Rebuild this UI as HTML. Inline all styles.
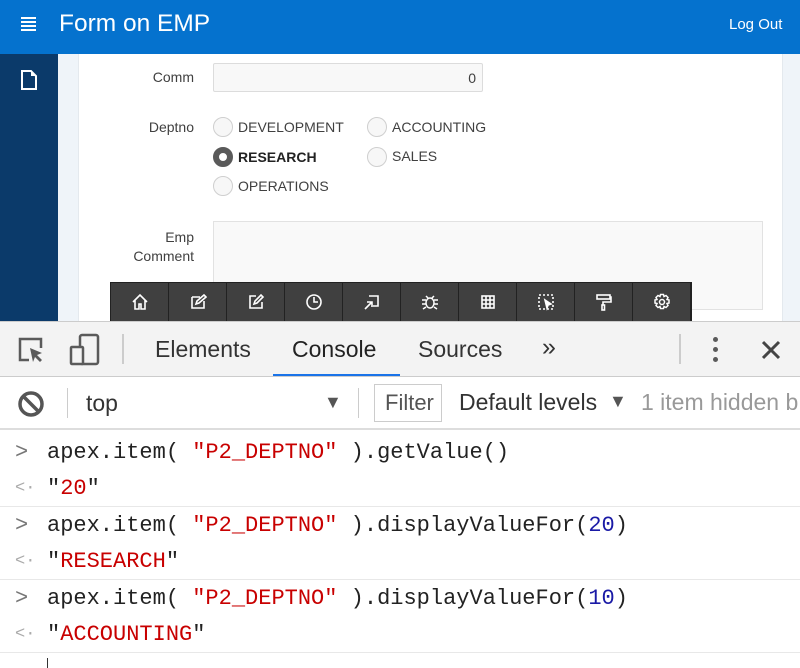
<!DOCTYPE html>
<html><head><style>
*{margin:0;padding:0;box-sizing:border-box}
body{width:800px;height:666px;overflow:hidden;font-family:"Liberation Sans",Arial,sans-serif;background:#fff;position:relative}
.abs{position:absolute}
.hdr{left:0;top:0;width:800px;height:54px;background:#0572ce;color:#fff}
.side{left:0;top:54px;width:58px;height:268px;background:#0b3a6a}
.strip{left:58px;top:54px;width:21px;height:268px;background:#eff4f9;border-right:1px solid #e4e9ee}
.rstrip{left:782px;top:54px;width:18px;height:268px;background:#eff4f9;border-left:1px solid #e4e9ee}
.lbl{font-size:14px;color:#404040;text-align:right}
.radio{width:20px;height:20px;border-radius:50%;border:1px solid #cfcfcf;background:#f7f7f7}
.rt{font-size:14px;color:#404040}
.tb{left:110px;top:282px;width:582px;height:40px;background:#404040;border:1px solid #222;display:flex}
.tb div{width:58.2px;height:38px;border-right:1px solid #222;display:flex;align-items:center;justify-content:center}
.mono{font-family:"Liberation Mono",monospace;font-size:22px;color:#222}
.red{color:#c80000}.blue{color:#1a1aa6}
.sep{left:0;width:800px;height:1px;background:#e8e8e8}
</style></head><body>
<div class="abs hdr">
 <div class="abs" style="left:21px;top:17px;width:15px">
  <div style="height:2px;background:#fff;margin-bottom:2px"></div><div style="height:2px;background:#fff;margin-bottom:2px"></div><div style="height:2px;background:#fff;margin-bottom:2px"></div><div style="height:2px;background:#fff"></div>
 </div>
 <div class="abs" style="left:59px;top:10px;font-size:24.5px">Form on EMP</div>
 <div class="abs" style="left:729px;top:16px;font-size:15px">Log Out</div>
</div>
<div class="abs side">
 <svg class="abs" style="left:20px;top:15px" width="18" height="22" viewBox="0 0 18 22"><path d="M2 2h9l5 5v13H2z" fill="none" stroke="#fff" stroke-width="2"/><path d="M11 2v5h5" fill="#fff"/></svg>
</div>
<div class="abs strip"></div>
<div class="abs rstrip"></div>
<div class="abs lbl" style="left:100px;top:69px;width:94px">Comm</div>
<div class="abs" style="left:213px;top:63px;width:270px;height:29px;background:#f8f8f8;border:1px solid #dcdcdc;border-radius:2px;font-size:14px;color:#404040;text-align:right;padding:6px 6px">0</div>
<div class="abs lbl" style="left:100px;top:119px;width:94px">Deptno</div>
<div class="abs radio" style="left:213px;top:117px"></div><div class="abs rt" style="left:238px;top:119px">DEVELOPMENT</div>
<div class="abs radio" style="left:367px;top:117px"></div><div class="abs rt" style="left:392px;top:119px">ACCOUNTING</div>
<div class="abs radio" style="left:213px;top:147px;background:#fff;border:6px solid #5a5a5a"></div><div class="abs rt" style="left:238px;top:149px;font-weight:bold;color:#222">RESEARCH</div>
<div class="abs radio" style="left:367px;top:147px"></div><div class="abs rt" style="left:392px;top:148px">SALES</div>
<div class="abs radio" style="left:213px;top:176px"></div><div class="abs rt" style="left:238px;top:178px">OPERATIONS</div>
<div class="abs lbl" style="left:100px;top:228px;width:94px;line-height:19px">Emp<br>Comment</div>
<div class="abs" style="left:213px;top:221px;width:550px;height:89px;background:#f9f9f9;border:1px solid #e2e2e2"></div>
<div class="abs tb">
 <div><svg width="18" height="18" viewBox="0 0 18 18" fill="none" stroke="#fff" stroke-width="1.6"><path d="M2 9L9 2l7 7M4 7v9h4v-5h2v5h4V7"/></svg></div>
 <div><svg width="18" height="18" viewBox="0 0 18 18" fill="none" stroke="#fff" stroke-width="1.6"><path d="M3 4h8M3 4v11h12V8M7 11l1-3 7-6 2 2-7 6z"/></svg></div>
 <div><svg width="18" height="18" viewBox="0 0 18 18" fill="none" stroke="#fff" stroke-width="1.6"><path d="M9 3H3v12h12V9M7 11l1-3 6-6 2 2-6 6z"/></svg></div>
 <div><svg width="18" height="18" viewBox="0 0 18 18" fill="none" stroke="#fff" stroke-width="1.6"><circle cx="9" cy="9" r="7"/><path d="M9 4v5h4"/></svg></div>
 <div><svg width="18" height="18" viewBox="0 0 18 18" fill="none" stroke="#fff" stroke-width="1.6"><path d="M6 3h9v10h-5M2 16l7-7M4 9h5v5"/></svg></div>
 <div><svg width="18" height="18" viewBox="0 0 18 18" fill="none" stroke="#fff" stroke-width="1.5"><ellipse cx="9" cy="10" rx="4" ry="5"/><path d="M1 7h4M13 7h4M1 11h4M13 11h4M2 16l3-2M16 16l-3-2M5 3l2 2M13 3l-2 2"/></svg></div>
 <div><svg width="18" height="18" viewBox="0 0 18 18" fill="none" stroke="#fff" stroke-width="1.6"><rect x="3" y="3" width="12" height="12"/><path d="M3 7h12M3 11h12M7 3v12M11 3v12"/></svg></div>
 <div><svg width="18" height="18" viewBox="0 0 18 18" fill="none" stroke="#fff" stroke-width="1.6" stroke-dasharray="2 2"><rect x="2" y="2" width="14" height="14"/><path d="M8 7l6 4-3 1-1 3z" fill="#fff" stroke-dasharray="0"/></svg></div>
 <div><svg width="18" height="18" viewBox="0 0 18 18" fill="none" stroke="#fff" stroke-width="1.6"><rect x="2" y="2" width="13" height="4"/><path d="M15 4h1v5H8v3"/><rect x="7" y="12" width="2.5" height="5"/></svg></div>
 <div><svg width="18" height="18" viewBox="0 0 18 18" fill="none" stroke="#fff" stroke-width="1.5"><circle cx="9" cy="9" r="2.5"/><path d="M7.5 1.5h3l.5 2 2-1 2 2-1 2 2 .5v3l-2 .5 1 2-2 2-2-1-.5 2h-3l-.5-2-2 1-2-2 1-2-2-.5v-3l2-.5-1-2 2-2 2 1z"/></svg></div>
</div>
<!-- devtools -->
<div class="abs" style="left:0;top:321px;width:800px;height:56px;background:#f3f3f3;border-top:1px solid #ccc;border-bottom:1px solid #ccc"></div>
<svg class="abs" style="left:17px;top:336px" width="30" height="30" viewBox="0 0 30 30" fill="none" stroke="#5a5a5a" stroke-width="2.5"><path d="M12 24H3V3h21v9"/><path d="M13 12l12 5-5 2 5 5-2 2-5-5-2 5z" fill="#5a5a5a" stroke="none"/></svg>
<svg class="abs" style="left:69px;top:333px" width="32" height="34" viewBox="0 0 32 34" fill="none" stroke="#5a5a5a" stroke-width="2.5"><rect x="11" y="2" width="18" height="29" rx="2"/><rect x="2" y="14" width="12" height="17" rx="1" fill="#f3f3f3"/></svg>
<div class="abs" style="left:122px;top:334px;width:2px;height:30px;background:#ccc"></div>
<div class="abs" style="left:155px;top:336px;font-size:23px;color:#333">Elements</div>
<div class="abs" style="left:292px;top:336px;font-size:23px;color:#222">Console</div>
<div class="abs" style="left:273px;top:374px;width:127px;height:2px;background:#1a73e8"></div>
<div class="abs" style="left:418px;top:336px;font-size:23px;color:#333">Sources</div>
<div class="abs" style="left:542px;top:333px;font-size:25px;color:#333">»</div>
<div class="abs" style="left:679px;top:334px;width:2px;height:30px;background:#ccc"></div>
<div class="abs" style="left:713px;top:337px"><div style="width:5px;height:5px;border-radius:50%;background:#5a5a5a;margin-bottom:5px"></div><div style="width:5px;height:5px;border-radius:50%;background:#5a5a5a;margin-bottom:5px"></div><div style="width:5px;height:5px;border-radius:50%;background:#5a5a5a"></div></div>
<svg class="abs" style="left:761px;top:340px" width="20" height="20" viewBox="0 0 20 20" stroke="#444" stroke-width="3"><path d="M2 2l16 16M18 2L2 18"/></svg>
<div class="abs" style="left:0;top:377px;width:800px;height:53px;background:#fff;border-bottom:2px solid #ddd"></div>
<svg class="abs" style="left:17px;top:390px" width="28" height="28" viewBox="0 0 28 28" fill="none" stroke="#555" stroke-width="3.5"><circle cx="14" cy="14" r="11"/><path d="M6 6l16 16"/></svg>
<div class="abs" style="left:67px;top:388px;width:1px;height:30px;background:#ccc"></div>
<div class="abs" style="left:86px;top:390px;font-size:23px;color:#333">top</div>
<div class="abs" style="left:324px;top:392px;font-size:18px;color:#555">▼</div>
<div class="abs" style="left:358px;top:388px;width:1px;height:30px;background:#ccc"></div>
<div class="abs" style="left:374px;top:384px;width:68px;height:38px;border:1px solid #ccc;font-size:22px;color:#555;padding:5px 0 0 10px;overflow:hidden;white-space:nowrap">Filter</div>
<div class="abs" style="left:459px;top:389px;font-size:23px;color:#333">Default levels</div>
<div class="abs" style="left:609px;top:391px;font-size:18px;color:#555">▼</div>
<div class="abs" style="left:641px;top:389px;font-size:23px;color:#999;white-space:nowrap">1 item hidden b</div>
<!-- console rows -->
<div class="abs mono" style="left:15px;top:440px;color:#777">&gt;</div>
<div class="abs mono" style="left:47px;top:440px;white-space:pre">apex.item( <span class="red">"P2_DEPTNO"</span> ).getValue()</div>
<div class="abs mono" style="left:15px;top:479px;color:#aaa;font-size:17px">&lt;·</div>
<div class="abs mono" style="left:47px;top:476px">"<span class="red">20</span>"</div>
<div class="abs sep" style="top:506px"></div>
<div class="abs mono" style="left:15px;top:513px;color:#777">&gt;</div>
<div class="abs mono" style="left:47px;top:513px;white-space:pre">apex.item( <span class="red">"P2_DEPTNO"</span> ).displayValueFor(<span class="blue">20</span>)</div>
<div class="abs mono" style="left:15px;top:552px;color:#aaa;font-size:17px">&lt;·</div>
<div class="abs mono" style="left:47px;top:549px">"<span class="red">RESEARCH</span>"</div>
<div class="abs sep" style="top:579px"></div>
<div class="abs mono" style="left:15px;top:586px;color:#777">&gt;</div>
<div class="abs mono" style="left:47px;top:586px;white-space:pre">apex.item( <span class="red">"P2_DEPTNO"</span> ).displayValueFor(<span class="blue">10</span>)</div>
<div class="abs mono" style="left:15px;top:625px;color:#aaa;font-size:17px">&lt;·</div>
<div class="abs mono" style="left:47px;top:622px">"<span class="red">ACCOUNTING</span>"</div>
<div class="abs sep" style="top:652px"></div>
<div class="abs" style="left:47px;top:658px;width:1px;height:10px;background:#333"></div>
</body></html>
